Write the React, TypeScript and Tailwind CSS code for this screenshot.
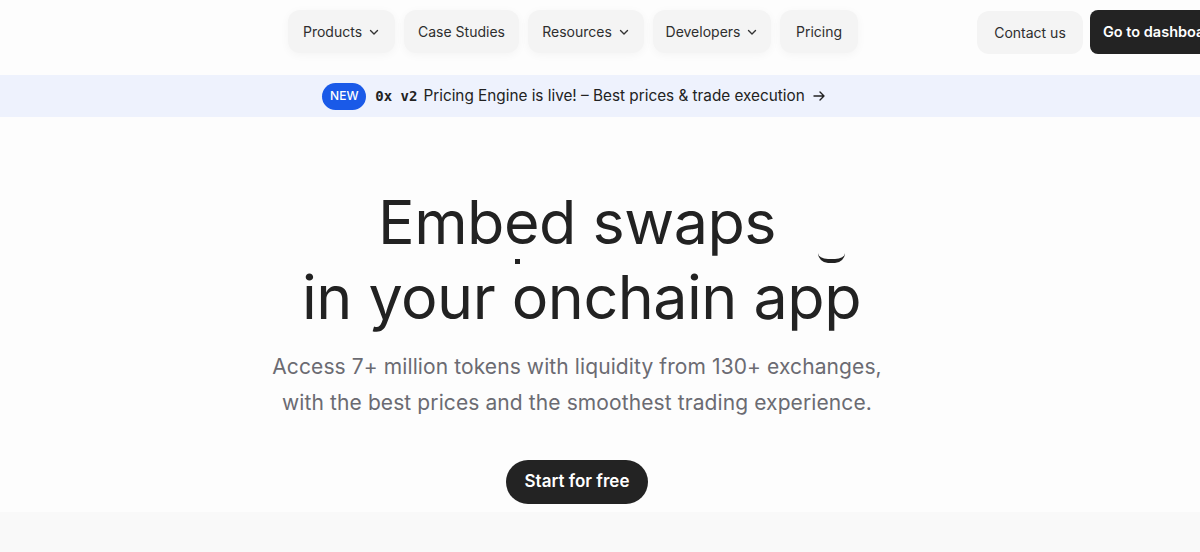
import React from "react";

const Chevron = () => (
  <svg width="12" height="12" viewBox="0 0 12 12" fill="none" className="ml-[6px]">
    <path d="M2.5 4.5 6 8l3.5-3.5" stroke="#333" strokeWidth="1.4" strokeLinecap="round" strokeLinejoin="round" />
  </svg>
);

const NavBtn = ({ label, chevron, w }: { label: string; chevron?: boolean; w: string }) => (
  <div
    className={`flex h-[43px] items-center justify-center rounded-[12px] bg-[#f4f4f4] text-[14px] text-[#2e2e2e] shadow-[0_2px_10px_rgba(0,0,0,0.04)] ${w}`}
  >
    {label}
    {chevron && <Chevron />}
  </div>
);

export default function App() {
  return (
    <div
      className="relative h-[552px] w-[1200px] overflow-hidden bg-[#fdfdfd]"
      style={{ fontFamily: "Inter, 'Noto Sans', sans-serif" }}
    >
      <header className="flex h-[75px] items-start pt-[10px] pl-[288px]">
        <nav className="flex items-center gap-[9px]">
          <NavBtn label="Products" chevron w="w-[107px]" />
          <NavBtn label="Case Studies" w="w-[115px]" />
          <NavBtn label="Resources" chevron w="w-[116px]" />
          <NavBtn label="Developers" chevron w="w-[118px]" />
          <NavBtn label="Pricing" w="w-[78px]" />
        </nav>
        <div className="ml-[119px] flex shrink-0 items-center gap-[7px]">
          <div className="flex h-[43px] w-[106px] items-center justify-center rounded-[12px] bg-[#f4f4f4] text-[14px] text-[#2e2e2e]">
            Contact us
          </div>
          <div className="flex h-[44px] w-[150px] shrink-0 items-center rounded-[8px] bg-[#232323] pl-[13px] text-[14.5px] font-semibold whitespace-nowrap text-white">
            Go to dashboard
          </div>
        </div>
      </header>

      <div className="flex h-[42px] items-center justify-center bg-[#eef2fd] pr-[52px] text-[15.3px] text-[#222]">
        <span className="mr-[9px] flex h-[27px] w-[44px] items-center justify-center rounded-full bg-[#1a5ae8] text-[12px] font-medium text-white">
          NEW
        </span>
        <span
          className="mr-[6px] font-bold"
          style={{ fontFamily: "'DejaVu Sans Mono', 'Liberation Mono', monospace", fontSize: "14px" }}
        >
          0x v2
        </span>
        <span>Pricing Engine is live! – Best prices &amp; trade execution</span>
        <svg width="14" height="14" viewBox="0 0 14 14" fill="none" className="ml-[7px]">
          <path d="M2 7h10M8 3l4 4-4 4" stroke="#222" strokeWidth="1.4" strokeLinecap="round" strokeLinejoin="round" />
        </svg>
      </div>

      <main className="relative flex flex-col items-center pt-[68px] pr-[46px]">
        <h1 className="text-center text-[61px] leading-[75px] font-normal tracking-[-0.5px] text-[#222]">
          <div>Embed swaps</div>
          <div className="pl-[9px]">in your onchain app</div>
        </h1>
        <span className="absolute top-[142px] left-[515px] h-[5px] w-[5px] bg-[#222]" />
        <span className="absolute top-[136px] left-[818px] h-[10px] w-[27px] rounded-b-full border-b-[4px] border-[#222]" />
        <p className="mt-[14px] text-center text-[21px] leading-[36px] tracking-[0.1px] text-[#6b6b72]">
          Access 7+ million tokens with liquidity from 130+ exchanges,
          <br />
          with the best prices and the smoothest trading experience.
        </p>
        <button className="mt-[39px] flex h-[44px] w-[142px] items-center justify-center rounded-full bg-[#232323] text-[17px] font-semibold text-white">
          Start for free
        </button>
      </main>
      <div className="absolute right-0 bottom-0 left-0 h-[40px] bg-[#f9f9f9]" />
    </div>
  );
}
